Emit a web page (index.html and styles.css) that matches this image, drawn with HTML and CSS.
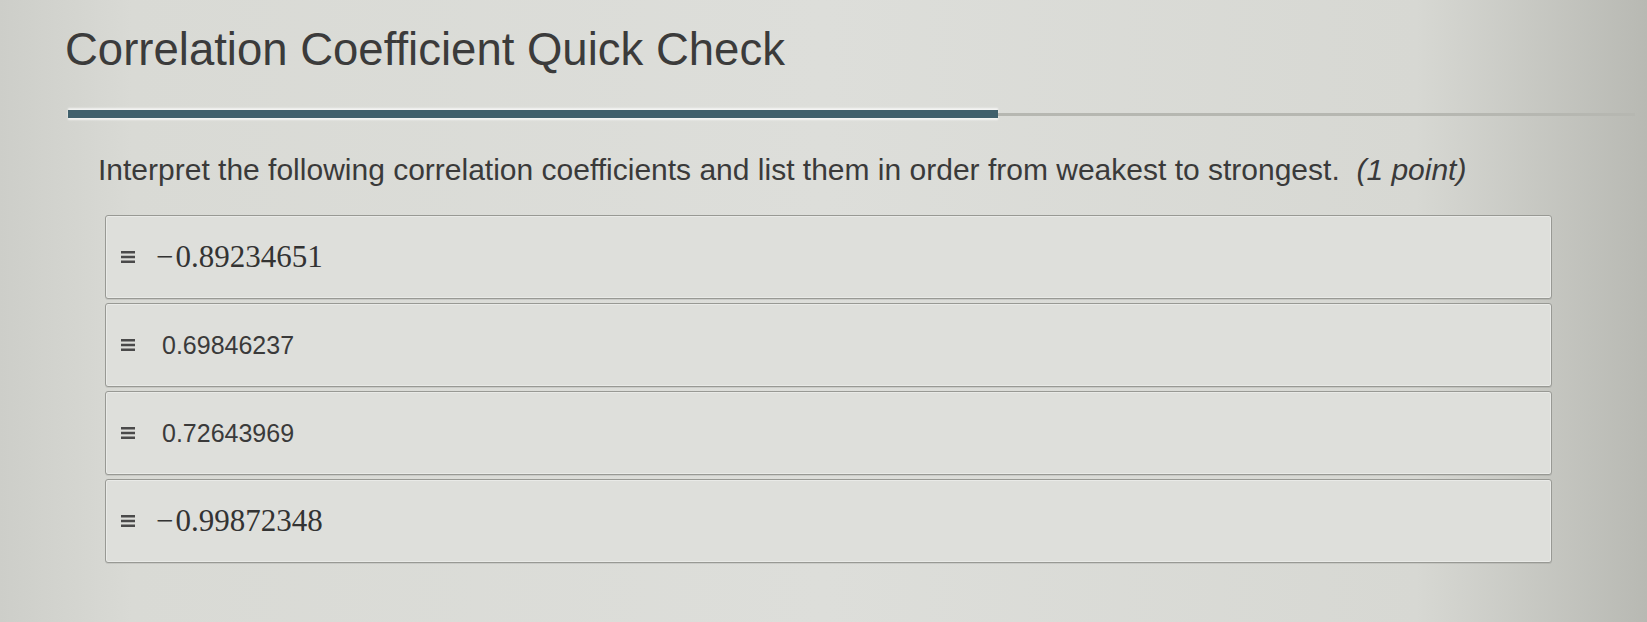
FILE: index.html
```html
<!DOCTYPE html>
<html>
<head>
	<meta charset="utf-8">
	<meta name="viewport" content="width=device-width, initial-scale=1.0">
	<title>Correlation Coefficient Quick Check</title>

	<!-- 样式 -->
	<link rel="stylesheet" href="styles.css">
</head>
<body>
	<div class="quiz">

		<!-- 标题 -->
		<h1 class="title">Correlation Coefficient Quick Check</h1>

		<!-- 进度条 -->
		<div class="progress">
			<div class="bar"></div>
			<div class="track"></div>
		</div>

		<!-- 题目 -->
		<p class="question">Interpret the following correlation coefficients and list them in order from weakest to strongest.&nbsp; <em>(1 point)</em></p>

		<!-- 可拖动排序的选项 -->
		<ul class="sortList">
			<li>
				<svg class="handle" width="14" height="12" viewBox="0 0 14 12"><rect y="0" width="14" height="2.5"/><rect y="4.75" width="14" height="2.5"/><rect y="9.5" width="14" height="2.5"/></svg>
				<span class="math"><span class="minus">&minus;</span>0.89234651</span>
			</li>
			<li>
				<svg class="handle" width="14" height="12" viewBox="0 0 14 12"><rect y="0" width="14" height="2.5"/><rect y="4.75" width="14" height="2.5"/><rect y="9.5" width="14" height="2.5"/></svg>
				<span class="plain">0.69846237</span>
			</li>
			<li>
				<svg class="handle" width="14" height="12" viewBox="0 0 14 12"><rect y="0" width="14" height="2.5"/><rect y="4.75" width="14" height="2.5"/><rect y="9.5" width="14" height="2.5"/></svg>
				<span class="plain">0.72643969</span>
			</li>
			<li>
				<svg class="handle" width="14" height="12" viewBox="0 0 14 12"><rect y="0" width="14" height="2.5"/><rect y="4.75" width="14" height="2.5"/><rect y="9.5" width="14" height="2.5"/></svg>
				<span class="math"><span class="minus">&minus;</span>0.99872348</span>
			</li>
		</ul>
	</div>
</body>
</html>
```

FILE: styles.css
```css
* {
	margin: 0;
	padding: 0;
}

ul, li {
	list-style: none;
}

body {
	font-family: "Liberation Sans", Arial, sans-serif;
	color: #3a3a3a;
	background: linear-gradient(90deg, #cdcec9 0%, #d9dad5 8%, #dddeda 50%, #d7d8d3 86%, #b8b9b3 100%);
	min-height: 622px;
}

.quiz {
	padding-bottom: 40px;
}

/* 标题 */
.title {
	font-size: 45.5px;
	font-weight: normal;
	line-height: 52px;
	padding: 24px 0 0 65px;
	color: #3b3b3b;
}

/* 进度条 */
.progress {
	display: flex;
	align-items: center;
	margin: 34px 12px 0 68px;
	height: 8px;
}

.progress .bar {
	width: 930px;
	height: 8px;
	background-color: #40606c;
	box-shadow: 0 -2px 2px rgba(255, 255, 255, 0.7), 0 2px 2px rgba(255, 255, 255, 0.7);
}

.progress .track {
	flex: 1;
	height: 3px;
	background-color: #b6b7b1;
}

/* 题目 */
.question {
	font-size: 30px;
	line-height: 36px;
	margin-top: 34px;
	padding-left: 98px;
}

.question em {
	font-style: italic;
}

/* 选项列表 */
.sortList {
	display: flex;
	flex-direction: column;
	gap: 4px;
	margin: 27px 95px 0 105px;
}

.sortList > li {
	height: 84px;
	display: flex;
	align-items: center;
	padding-left: 15px;
	border: 1px solid #989994;
	border-radius: 3px;
	background-color: #dedfdb;
	box-shadow: inset 0 0 0 1px rgba(255, 255, 255, 0.35), 0 1px 0 rgba(0, 0, 0, 0.08);
	box-sizing: border-box;
}

/* 拖动把手 */
.handle {
	fill: #4a4a4a;
	flex: none;
	margin-right: 21px;
}

/* 公式样式的数字 */
.math {
	font-family: "Liberation Serif", "Times New Roman", serif;
	font-size: 31px;
	color: #333;
}

.math .minus {
	margin-right: 2px;
}

.plain {
	font-size: 25px;
	margin-left: 6px;
}
```
